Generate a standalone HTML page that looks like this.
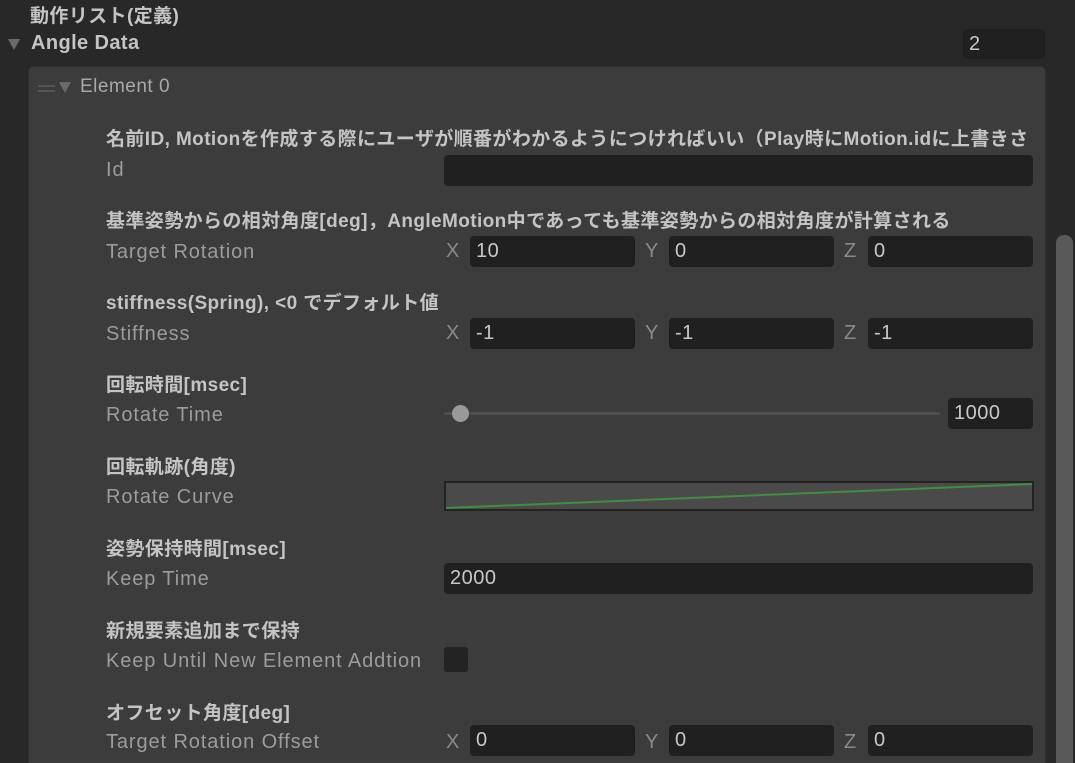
<!DOCTYPE html><html style="width:1075px;height:763px;overflow:hidden"><head><meta charset="utf-8"><style>
*{margin:0;padding:0;box-sizing:border-box}
body{width:1075px;height:763px;background:#282828;position:relative;overflow:hidden;font-family:"Liberation Sans","Noto Sans CJK JP",sans-serif}
.a{position:absolute;white-space:nowrap}
.h{font-size:19px;font-weight:bold;color:#c4c4c4;letter-spacing:0.4px}
.l{font-size:20px;color:#9c9c9c;letter-spacing:0.9px}
.f{position:absolute;background:#202020;border-radius:4px;height:31px;color:#c8c8c8;font-size:20px;padding:5px 6px;line-height:21px;letter-spacing:0.5px}
.x{position:absolute;font-size:20px;color:#8a8a8a}
</style></head><body>
<div class="a h" style="left:30px;top:1px">動作リスト(定義)</div>
<div class="a" style="left:8px;top:39px;width:0;height:0;border-left:6px solid transparent;border-right:6px solid transparent;border-top:11px solid #6a6a6a"></div>
<div class="a h" style="left:31px;top:32px;font-size:20px">Angle Data</div>
<div class="f" style="left:963px;top:29px;width:82px;height:30px">2</div>
<div class="a" style="left:28px;top:66px;width:1018px;height:720px;background:#3c3c3c;border-radius:5px;border:1px solid #2e2e2e"></div>
<div class="a" style="left:1056px;top:235px;width:17px;height:540px;background:#595959;border-radius:8px"></div>
<div class="a" style="left:38px;top:85px;width:17px;height:2px;background:#555"></div>
<div class="a" style="left:38px;top:90px;width:17px;height:2px;background:#555"></div>
<div class="a" style="left:59px;top:82px;width:0;height:0;border-left:6px solid transparent;border-right:6px solid transparent;border-top:11px solid #6a6a6a"></div>
<div class="a" style="left:80px;top:76px;font-size:19px;color:#a8a8a8;letter-spacing:0.5px">Element 0</div>

<div class="a h" style="left:106px;top:124px">名前ID, Motionを作成する際にユーザが順番がわかるようにつければいい（Play時にMotion.idに上書きさ</div>
<div class="a l" style="left:106px;top:159px">Id</div>
<div class="f" style="left:444px;top:155px;width:589px"></div>

<div class="a h" style="left:106px;top:206px">基準姿勢からの相対角度[deg]，AngleMotion中であっても基準姿勢からの相対角度が計算される</div>
<div class="a l" style="left:106px;top:241px">Target Rotation</div>
<div class="x" style="left:446px;top:240px">X</div><div class="f" style="left:470px;top:236px;width:165px">10</div>
<div class="x" style="left:645px;top:240px">Y</div><div class="f" style="left:669px;top:236px;width:165px">0</div>
<div class="x" style="left:844px;top:240px">Z</div><div class="f" style="left:868px;top:236px;width:165px">0</div>

<div class="a h" style="left:106px;top:288px">stiffness(Spring), &lt;0 でデフォルト値</div>
<div class="a l" style="left:106px;top:323px">Stiffness</div>
<div class="x" style="left:446px;top:322px">X</div><div class="f" style="left:470px;top:318px;width:165px">-1</div>
<div class="x" style="left:645px;top:322px">Y</div><div class="f" style="left:669px;top:318px;width:165px">-1</div>
<div class="x" style="left:844px;top:322px">Z</div><div class="f" style="left:868px;top:318px;width:165px">-1</div>

<div class="a h" style="left:106px;top:370px">回転時間[msec]</div>
<div class="a l" style="left:106px;top:404px">Rotate Time</div>
<div class="a" style="left:444px;top:412px;width:496px;height:3px;background:#4e4e4e;border-radius:2px"></div>
<div class="a" style="left:452px;top:405px;width:17px;height:17px;background:#999;border-radius:50%"></div>
<div class="f" style="left:948px;top:398px;width:85px">1000</div>

<div class="a h" style="left:106px;top:452px">回転軌跡(角度)</div>
<div class="a l" style="left:106px;top:486px">Rotate Curve</div>
<div class="a" style="left:444px;top:481px;width:590px;height:30px;background:#4a4a4a;border:2px solid #232323"></div>
<svg class="a" style="left:446px;top:483px" width="586" height="26"><line x1="0" y1="25" x2="586" y2="1" stroke="#3f8f3f" stroke-width="2"/></svg>

<div class="a h" style="left:106px;top:534px">姿勢保持時間[msec]</div>
<div class="a l" style="left:106px;top:568px">Keep Time</div>
<div class="f" style="left:444px;top:563px;width:589px">2000</div>

<div class="a h" style="left:106px;top:616px">新規要素追加まで保持</div>
<div class="a l" style="left:106px;top:650px">Keep Until New Element Addtion</div>
<div class="a" style="left:444px;top:647px;width:24px;height:25px;background:#232323;border-radius:3px"></div>

<div class="a h" style="left:106px;top:698px">オフセット角度[deg]</div>
<div class="a l" style="left:106px;top:731px">Target Rotation Offset</div>
<div class="x" style="left:446px;top:731px">X</div><div class="f" style="left:470px;top:725px;width:165px">0</div>
<div class="x" style="left:645px;top:731px">Y</div><div class="f" style="left:669px;top:725px;width:165px">0</div>
<div class="x" style="left:844px;top:731px">Z</div><div class="f" style="left:868px;top:725px;width:165px">0</div>
</body></html>
